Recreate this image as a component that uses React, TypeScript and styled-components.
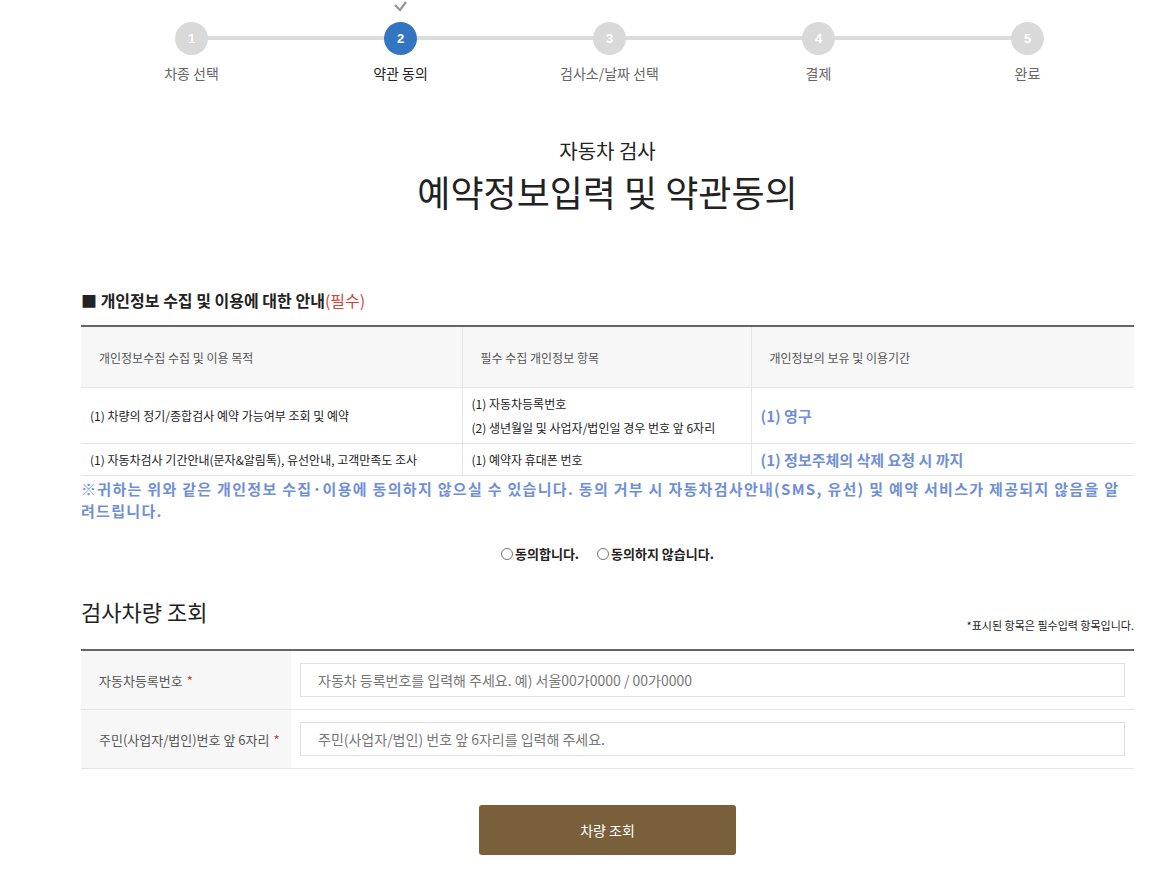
import React from 'react';
import styled, { createGlobalStyle } from 'styled-components';

const Global = createGlobalStyle`
  body {
    margin: 0;
    font-family: "Noto Sans CJK KR", "Noto Sans", sans-serif;
    color: #222;
    background: #fff;
  }
`;

const Page = styled.div`
  width: 1053px;
  margin-left: 81px;
`;

const Steps = styled.ol`
  position: relative;
  display: grid;
  grid-template-columns: repeat(5, 209px);
  margin: 0 0 0 6px;
  padding: 22px 0 0;
  list-style: none;
  &::before {
    content: '';
    position: absolute;
    left: 105px;
    right: 105px;
    top: 36px;
    height: 4px;
    background: #dcdcdc;
  }
`;

const Step = styled.li<{ $active?: boolean }>`
  position: relative;
  display: flex;
  flex-direction: column;
  align-items: center;
  gap: 8px;
  font-size: 14px;
  color: ${p => (p.$active ? '#222' : '#666')};
`;

const Circle = styled.span<{ $active?: boolean }>`
  position: relative;
  width: 33px;
  height: 33px;
  border-radius: 50%;
  background: ${p => (p.$active ? '#3375c0' : '#d9d9d9')};
  color: #fff;
  font: bold 13px "Liberation Sans", sans-serif;
  display: flex;
  align-items: center;
  justify-content: center;
`;

const Check = styled.svg`
  position: absolute;
  top: -22px;
  left: 9px;
`;

const TitleBox = styled.div`
  text-align: center;
  margin-top: 53px;
  h2 { margin: 0; font-weight: 400; font-size: 20px; line-height: 30px; }
  h1 { margin: 2px 0 0; font-weight: 400; font-size: 36px; line-height: 46px; }
`;

const SectionHead = styled.h3`
  margin: 74px 0 13px;
  font-size: 16px;
  font-weight: 700;
  span { color: #d0463b; font-weight: 400; }
`;

const InfoTable = styled.table`
  width: 100%;
  border-collapse: collapse;
  border-top: 2px solid #666;
  font-size: 12px;
  th {
    height: 58px;
    background: #f7f7f7;
    font-weight: 400;
    color: #555;
    text-align: left;
    padding-left: 18px;
  }
  td { padding: 0 9px; border-top: 1px solid #e4e4e4; line-height: 24px; }
  th + th, td + td { border-left: 1px solid #e4e4e4; }
  tbody tr:first-child td { height: 55px; }
  tbody tr:last-child td { height: 31px; border-bottom: 1px solid #e4e4e4; }
`;

const Period = styled.td`
  color: #6f8fd8;
  font-weight: 700;
  font-size: 15px;
`;

const Notice = styled.p`
  margin: 2px 0 0;
  color: #6f8fd8;
  font-weight: 700;
  font-size: 15px;
  line-height: 22px;
  letter-spacing: 1.3px;
`;

const Radios = styled.div`
  display: flex;
  justify-content: center;
  gap: 18px;
  margin-top: 22px;
  font-size: 13px;
  font-weight: 700;
  label { display: flex; align-items: center; gap: 2px; }
  input { margin: 0; width: 12px; height: 12px; }
`;

const FormHead = styled.div`
  display: flex;
  justify-content: space-between;
  align-items: flex-end;
  margin-top: 32px;
  h3 { margin: 0; font-size: 22px; font-weight: 400; }
  small { font-size: 11px; margin-bottom: -6px; }
`;

const FormTable = styled.div`
  margin-top: 22px;
  border-top: 2px solid #666;
`;

const Row = styled.div`
  display: grid;
  grid-template-columns: 210px 1fr;
  height: 58px;
  border-bottom: 1px solid #e4e4e4;
`;

const Label = styled.label`
  background: #f7f7f7;
  display: flex;
  align-items: center;
  padding-left: 18px;
  font-size: 13px;
  color: #555;
  span { color: #d0463b; margin-left: 4px; }
`;

const Field = styled.div`
  display: flex;
  align-items: center;
  padding: 0 9px;
`;

const Input = styled.input`
  width: 100%;
  height: 34px;
  box-sizing: border-box;
  border: 1px solid #e0e0e0;
  padding: 0 17px;
  font: 14px "Noto Sans CJK KR", sans-serif;
  &::placeholder { color: #777; }
`;

const Button = styled.button`
  display: block;
  margin: 36px auto 0;
  width: 257px;
  height: 50px;
  border: 0;
  border-radius: 3px;
  background: #7a5f3b;
  color: #fff;
  font: 14px "Noto Sans CJK KR", sans-serif;
`;

const steps = ['차종 선택', '약관 동의', '검사소/날짜 선택', '결제', '완료'];

export default function App() {
  return (
    <Page>
      <Global />
      <Steps>
        {steps.map((s, i) => (
          <Step key={s} $active={i === 1}>
            <Circle $active={i === 1}>
              {i === 1 && (
                <Check width="15" height="12" viewBox="0 0 15 12">
                  <path d="M2 5l5 5 6-8" stroke="#999" strokeWidth="2.4" fill="none" />
                </Check>
              )}
              {i + 1}
            </Circle>
            {s}
          </Step>
        ))}
      </Steps>
      <TitleBox>
        <h2>자동차 검사</h2>
        <h1>예약정보입력 및 약관동의</h1>
      </TitleBox>
      <SectionHead>■ 개인정보 수집 및 이용에 대한 안내<span>(필수)</span></SectionHead>
      <InfoTable>
        <colgroup>
          <col style={{ width: 381 }} />
          <col style={{ width: 289 }} />
          <col />
        </colgroup>
        <thead>
          <tr>
            <th>개인정보수집 수집 및 이용 목적</th>
            <th>필수 수집 개인정보 항목</th>
            <th>개인정보의 보유 및 이용기간</th>
          </tr>
        </thead>
        <tbody>
          <tr>
            <td>(1) 차량의 정기/종합검사 예약 가능여부 조회 및 예약</td>
            <td>(1) 자동차등록번호<br />(2) 생년월일 및 사업자/법인일 경우 번호 앞 6자리</td>
            <Period>(1) 영구</Period>
          </tr>
          <tr>
            <td>(1) 자동차검사 기간안내(문자&amp;알림톡), 유선안내, 고객만족도 조사</td>
            <td>(1) 예약자 휴대폰 번호</td>
            <Period>(1) 정보주체의 삭제 요청 시 까지</Period>
          </tr>
        </tbody>
      </InfoTable>
      <Notice>
        ※귀하는 위와 같은 개인정보 수집·이용에 동의하지 않으실 수 있습니다. 동의 거부 시 자동차검사안내(SMS, 유선) 및 예약 서비스가 제공되지 않음을 알려드립니다.
      </Notice>
      <Radios>
        <label><input type="radio" name="agree" />동의합니다.</label>
        <label><input type="radio" name="agree" />동의하지 않습니다.</label>
      </Radios>
      <FormHead>
        <h3>검사차량 조회</h3>
        <small>*표시된 항목은 필수입력 항목입니다.</small>
      </FormHead>
      <FormTable>
        <Row>
          <Label>자동차등록번호<span>*</span></Label>
          <Field><Input placeholder="자동차 등록번호를 입력해 주세요. 예) 서울00가0000 / 00가0000" /></Field>
        </Row>
        <Row>
          <Label>주민(사업자/법인)번호 앞 6자리<span>*</span></Label>
          <Field><Input placeholder="주민(사업자/법인) 번호 앞 6자리를 입력해 주세요." /></Field>
        </Row>
      </FormTable>
      <Button>차량 조회</Button>
    </Page>
  );
}
